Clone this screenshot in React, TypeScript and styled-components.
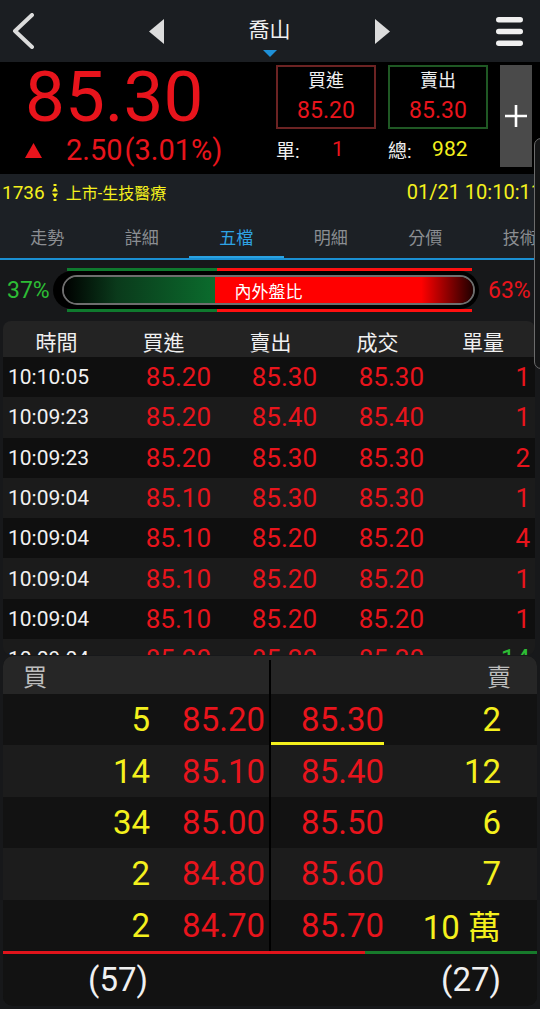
import styled, { createGlobalStyle } from 'styled-components';

const RED = '#e8141c';
const YELLOW = '#f4f01d';
const GREEN = '#2dbd35';

const GlobalStyle = createGlobalStyle`
  html, body {
    margin: 0;
    padding: 0;
    background: #17181a;
  }
  body {
    font-family: Roboto, "Noto Sans CJK TC", sans-serif;
  }
  * {
    box-sizing: border-box;
  }
`;

const Screen = styled.div`
  position: relative;
  width: 540px;
  height: 1009px;
  overflow: hidden;
  background: #17181a;
`;

/* top navigation */
const TopBar = styled.div`
  display: grid;
  grid-template-columns: 120px 1fr 120px;
  align-items: center;
  height: 62px;
  background: #1b1e22;
`;

const BackCell = styled.div`
  display: flex;
  align-items: center;
  padding-left: 12px;
`;

const NavCell = styled.div`
  display: flex;
  align-items: center;
  justify-content: space-between;
  height: 100%;
  padding: 0 30px 0 29px;
`;

const TitleBox = styled.div`
  display: flex;
  flex-direction: column;
  align-items: center;
  align-self: stretch;
  padding-top: 18px;
`;

const Title = styled.div`
  font-size: 21px;
  line-height: 24px;
  color: #f0f0f0;
`;

const Caret = styled.div`
  margin-top: 8px;
  width: 0;
  height: 0;
  border-left: 7px solid transparent;
  border-right: 7px solid transparent;
  border-top: 7px solid #1e90d8;
`;

const MenuCell = styled.div`
  display: flex;
  justify-content: flex-end;
  align-items: center;
  padding-right: 17px;
`;

/* quote */
const Quote = styled.div`
  display: flex;
  height: 112px;
  background: #000;
`;

const PriceBlock = styled.div`
  display: flex;
  flex-direction: column;
  width: 276px;
  padding-left: 25px;
`;

const LastPrice = styled.div`
  font-size: 71px;
  line-height: 70px;
  color: ${RED};
`;

const ChangeRow = styled.div`
  display: flex;
  align-items: center;
  margin-top: 4px;
  font-size: 29px;
  line-height: 29px;
  color: ${RED};
  svg {
    margin-right: 24px;
  }
`;

const Pct2 = styled.span`
  margin-left: 2px;
`;

const OrderCol = styled.div`
  display: flex;
  flex-direction: column;
  width: 212px;
  padding-top: 3px;
`;

const BoxRow = styled.div`
  display: flex;
  gap: 12px;
`;

const PriceBox = styled.div<{ $tone: 'buy' | 'sell' }>`
  display: flex;
  flex-direction: column;
  align-items: center;
  justify-content: center;
  gap: 6px;
  width: 100px;
  height: 64px;
  border: 2px solid ${(p) => (p.$tone === 'buy' ? '#6c2323' : '#1f5824')};
`;

const BoxLabel = styled.div`
  font-size: 18px;
  line-height: 22px;
  color: #f0f0f0;
`;

const BoxPrice = styled.div`
  font-size: 23px;
  line-height: 26px;
  color: ${RED};
`;

const StatRow = styled.div`
  display: flex;
  gap: 12px;
  margin-top: 8px;
  height: 24px;
`;

const Stat = styled.div`
  display: flex;
  align-items: center;
  width: 100px;
  font-size: 19px;
  color: #f0f0f0;
`;

const StatValue = styled.span<{ $color: string }>`
  flex: 1;
  text-align: center;
  font-size: 21px;
  color: ${(p) => p.$color};
`;

const PlusButton = styled.div`
  display: flex;
  align-items: center;
  justify-content: center;
  width: 32px;
  height: 102px;
  margin: 3px 0 0 12px;
  background: #4a4a4a;
`;

/* info bar */
const InfoBar = styled.div`
  display: flex;
  align-items: center;
  height: 36px;
  padding-left: 2px;
  background: #1c2025;
  color: ${YELLOW};
  overflow: hidden;
  white-space: nowrap;
  svg {
    margin: 0 8px 0 7px;
  }
`;

const Code = styled.span`
  font-size: 19px;
`;

const Sector = styled.span`
  font-size: 16px;
`;

const Stamp = styled.span`
  flex-shrink: 0;
  margin-left: auto;
  margin-right: -2px;
  font-size: 20px;
`;

/* tabs */
const Tabs = styled.div`
  display: flex;
  height: 50px;
  background: #1c2025;
  border-bottom: 2px solid #1a8fd2;
  overflow: hidden;
`;

const Tab = styled.div<{ $active?: boolean }>`
  position: relative;
  flex: 0 0 94.5px;
  display: flex;
  align-items: center;
  justify-content: center;
  padding-top: 4px;
  font-size: 17px;
  color: ${(p) => (p.$active ? '#2ea3e3' : '#8b8e92')};
  &::after {
    content: '';
    display: ${(p) => (p.$active ? 'block' : 'none')};
    position: absolute;
    left: 0;
    right: 0;
    bottom: -2px;
    height: 4px;
    background: #2aa2e2;
  }
`;

/* in / out ratio */
const RatioSection = styled.div`
  display: grid;
  grid-template-columns: 53px 426px 1fr;
  align-items: center;
  height: 60px;
`;

const Pct = styled.div<{ $color: string; $pad: number }>`
  padding-left: ${(p) => p.$pad}px;
  font-size: 23px;
  color: ${(p) => p.$color};
`;

const RatioBar = styled.div`
  display: flex;
  flex-direction: column;
`;

const RatioLine = styled.div`
  display: flex;
  height: 3px;
  margin: 0 7px 0 14px;
`;

const LineSeg = styled.div<{ $color: string }>`
  height: 100%;
  background: ${(p) => p.$color};
`;

const Pill = styled.div`
  display: flex;
  height: 38px;
  padding: 4px 4px 4px 9px;
  border-radius: 19px;
  background: #000;
`;

const Track = styled.div`
  position: relative;
  display: flex;
  flex: 1;
  border: 2px solid #6e6e6e;
  border-radius: 15px;
  overflow: hidden;
`;

const InFill = styled.div`
  background: linear-gradient(90deg, #000 0%, #0a3a1b 35%, #0b6c2d 100%);
`;

const OutFill = styled.div`
  flex: 1;
  background: linear-gradient(90deg, #ff0000 0%, #ff0000 80%, #200000 100%);
`;

const TrackLabel = styled.div`
  position: absolute;
  inset: 0;
  display: flex;
  align-items: center;
  justify-content: center;
  font-size: 17px;
  color: #fff;
`;

/* trade list */
const TradePanel = styled.div`
  height: 334px;
  margin: 1px 5px 0 3px;
  border-radius: 8px;
  overflow: hidden;
`;

const TradeGrid = styled.div<{ $bg: string }>`
  display: grid;
  grid-template-columns: 107px 107px 107px 107px 1fr;
  align-items: center;
  background: ${(p) => p.$bg};
`;

const TradeHead = styled(TradeGrid)`
  height: 36px;
  padding-top: 4px;
  font-size: 21px;
  color: #f0f0f0;
  text-align: center;
`;

const TradeRow = styled(TradeGrid)`
  height: 40.3px;
`;

const TimeCell = styled.div`
  padding-left: 5px;
  font-size: 21px;
  color: #f2f2f2;
`;

const NumCell = styled.div<{ $color: string; $pad: number }>`
  padding-right: ${(p) => p.$pad}px;
  text-align: right;
  font-size: 26px;
  color: ${(p) => p.$color};
`;

/* order book */
const BookPanel = styled.div`
  height: 350px;
  margin: 1px 3px 0 3px;
  border-radius: 10px;
  background: #121212;
  overflow: hidden;
`;

const BookGrid = styled.div<{ $bg: string }>`
  display: grid;
  grid-template-columns: 147px 119px 2px 113px 1fr;
  background: ${(p) => p.$bg};
`;

const BookHead = styled(BookGrid)`
  height: 38px;
  align-items: center;
  font-size: 24px;
  color: #bdbdbd;
`;

const HeadLeft = styled.div`
  grid-column: 1 / 3;
  padding-left: 20px;
`;

const HeadRight = styled.div`
  grid-column: 4 / 6;
  padding-right: 26px;
  text-align: right;
`;

const Divider = styled.div<{ $top?: number }>`
  align-self: stretch;
  margin-top: ${(p) => p.$top || 0}px;
  background: #000;
`;

const BookRow = styled(BookGrid)`
  height: 51.4px;
`;

const BookCell = styled.div<{ $color: string; $pad: number; $mark?: boolean }>`
  display: flex;
  align-items: center;
  justify-content: flex-end;
  padding-right: ${(p) => p.$pad}px;
  font-size: 33px;
  color: ${(p) => p.$color};
  box-shadow: ${(p) => (p.$mark ? `inset 0 -3px 0 ${YELLOW}` : 'none')};
`;

const VolumeLine = styled.div`
  display: flex;
  height: 3px;
`;

const TotalRow = styled(BookGrid)`
  height: 51px;
`;

const Handle = styled.div`
  position: absolute;
  left: 534px;
  top: 138px;
  width: 14px;
  height: 231px;
  border: 1.5px solid #6c6c6c;
  border-radius: 8px;
  background: #151617;
`;

const trades = [
  { t: '10:10:05', b: '85.20', s: '85.30', d: '85.30', q: '1' },
  { t: '10:09:23', b: '85.20', s: '85.40', d: '85.40', q: '1' },
  { t: '10:09:23', b: '85.20', s: '85.30', d: '85.30', q: '2' },
  { t: '10:09:04', b: '85.10', s: '85.30', d: '85.30', q: '1' },
  { t: '10:09:04', b: '85.10', s: '85.20', d: '85.20', q: '4' },
  { t: '10:09:04', b: '85.10', s: '85.20', d: '85.20', q: '1' },
  { t: '10:09:04', b: '85.10', s: '85.20', d: '85.20', q: '1' },
  { t: '10:09:04', b: '85.20', s: '85.20', d: '85.20', q: '14', up: true },
];

const book = [
  { bq: '5', bp: '85.20', ap: '85.30', aq: '2' },
  { bq: '14', bp: '85.10', ap: '85.40', aq: '12' },
  { bq: '34', bp: '85.00', ap: '85.50', aq: '6' },
  { bq: '2', bp: '84.80', ap: '85.60', aq: '7' },
  { bq: '2', bp: '84.70', ap: '85.70', aq: '10 萬' },
];

const tabs = ['走勢', '詳細', '五檔', '明細', '分價', '技術'];

const inRatio = 37;
const bidTotal = 57;
const askTotal = 27;

function App() {
  const bidShare = (bidTotal / (bidTotal + askTotal)) * 100;
  return (
    <Screen>
      <GlobalStyle />
      <TopBar>
        <BackCell>
          <svg width="22" height="36" viewBox="0 0 22 36">
            <polyline points="20,2 3,18 20,34" fill="none" stroke="#dcdcdc" strokeWidth="4" strokeLinecap="round" strokeLinejoin="round" />
          </svg>
        </BackCell>
        <NavCell>
          <svg width="15" height="25" viewBox="0 0 15 25">
            <polygon points="15,0 0,12.5 15,25" fill="#dcdcdc" />
          </svg>
          <TitleBox>
            <Title>喬山</Title>
            <Caret />
          </TitleBox>
          <svg width="15" height="25" viewBox="0 0 15 25">
            <polygon points="0,0 15,12.5 0,25" fill="#dcdcdc" />
          </svg>
        </NavCell>
        <MenuCell>
          <svg width="27" height="29" viewBox="0 0 27 29">
            <rect x="0" y="0" width="27" height="5.5" rx="2.75" fill="#f0f0f0" />
            <rect x="0" y="11.75" width="27" height="5.5" rx="2.75" fill="#f0f0f0" />
            <rect x="0" y="23.5" width="27" height="5.5" rx="2.75" fill="#f0f0f0" />
          </svg>
        </MenuCell>
      </TopBar>

      <Quote>
        <PriceBlock>
          <LastPrice>85.30</LastPrice>
          <ChangeRow>
            <svg width="17" height="15" viewBox="0 0 17 15">
              <polygon points="8.5,0 17,15 0,15" fill={RED} />
            </svg>
            2.50<Pct2>(3.01%)</Pct2>
          </ChangeRow>
        </PriceBlock>
        <OrderCol>
          <BoxRow>
            <PriceBox $tone="buy">
              <BoxLabel>買進</BoxLabel>
              <BoxPrice>85.20</BoxPrice>
            </PriceBox>
            <PriceBox $tone="sell">
              <BoxLabel>賣出</BoxLabel>
              <BoxPrice>85.30</BoxPrice>
            </PriceBox>
          </BoxRow>
          <StatRow>
            <Stat>
              單:<StatValue $color={RED}>1</StatValue>
            </Stat>
            <Stat>
              總:<StatValue $color={YELLOW}>982</StatValue>
            </Stat>
          </StatRow>
        </OrderCol>
        <PlusButton>
          <svg width="24" height="24" viewBox="0 0 24 24">
            <path d="M12 1v22M1 12h22" stroke="#fff" strokeWidth="2.6" />
          </svg>
        </PlusButton>
      </Quote>

      <InfoBar>
        <Code>1736</Code>
        <svg width="6" height="17" viewBox="0 0 6 17">
          <rect x="1.5" y="0" width="3" height="2" fill={YELLOW} />
          <polygon points="0,7.5 3,3 6,7.5" fill={YELLOW} />
          <polygon points="0,9.5 3,14 6,9.5" fill={YELLOW} />
          <rect x="1.5" y="15" width="3" height="2" fill={YELLOW} />
        </svg>
        <Sector>上市-生技醫療</Sector>
        <Stamp>01/21 10:10:11</Stamp>
      </InfoBar>

      <Tabs>
        {tabs.map((t) => (
          <Tab key={t} $active={t === '五檔'}>
            {t}
          </Tab>
        ))}
      </Tabs>

      <RatioSection>
        <Pct $color={GREEN} $pad={7}>
          {inRatio}%
        </Pct>
        <RatioBar>
          <RatioLine>
            <LineSeg $color="#0f7a2e" style={{ width: `${inRatio}%` }} />
            <LineSeg $color="#ff1010" style={{ flex: 1 }} />
          </RatioLine>
          <Pill>
            <Track>
              <InFill style={{ width: `${inRatio}%` }} />
              <OutFill />
              <TrackLabel>內外盤比</TrackLabel>
            </Track>
          </Pill>
          <RatioLine>
            <LineSeg $color="#0f7a2e" style={{ width: `${inRatio}%` }} />
            <LineSeg $color="#ff1010" style={{ flex: 1 }} />
          </RatioLine>
        </RatioBar>
        <Pct $color={RED} $pad={9}>
          {100 - inRatio}%
        </Pct>
      </RatioSection>

      <TradePanel>
        <TradeHead $bg="#232323">
          <div>時間</div>
          <div>買進</div>
          <div>賣出</div>
          <div>成交</div>
          <div>單量</div>
        </TradeHead>
        {trades.map((r, i) => (
          <TradeRow key={i} $bg={i % 2 ? '#1b1b1b' : '#0f0f0f'}>
            <TimeCell>{r.t}</TimeCell>
            <NumCell $color={RED} $pad={6}>{r.b}</NumCell>
            <NumCell $color={RED} $pad={7}>{r.s}</NumCell>
            <NumCell $color={RED} $pad={7}>{r.d}</NumCell>
            <NumCell $color={r.up ? GREEN : RED} $pad={5}>{r.q}</NumCell>
          </TradeRow>
        ))}
      </TradePanel>

      <BookPanel>
        <BookHead $bg="#262626">
          <HeadLeft>買</HeadLeft>
          <Divider $top={4} />
          <HeadRight>賣</HeadRight>
        </BookHead>
        {book.map((r, i) => (
          <BookRow key={i} $bg={i % 2 ? '#1c1c1c' : '#121212'}>
            <BookCell $color={YELLOW} $pad={0}>{r.bq}</BookCell>
            <BookCell $color={RED} $pad={4}>{r.bp}</BookCell>
            <Divider />
            <BookCell $color={RED} $pad={0} $mark={i === 0}>{r.ap}</BookCell>
            <BookCell $color={YELLOW} $pad={36}>{r.aq}</BookCell>
          </BookRow>
        ))}
        <VolumeLine>
          <LineSeg $color="#e0141b" style={{ width: `${bidShare}%` }} />
          <LineSeg $color="#177a2b" style={{ flex: 1 }} />
        </VolumeLine>
        <TotalRow $bg="#121212">
          <BookCell $color="#f0f0f0" $pad={2}>({bidTotal})</BookCell>
          <div />
          <div />
          <div />
          <BookCell $color="#f0f0f0" $pad={36}>({askTotal})</BookCell>
        </TotalRow>
      </BookPanel>

      <Handle />
    </Screen>
  );
}

export default App;
